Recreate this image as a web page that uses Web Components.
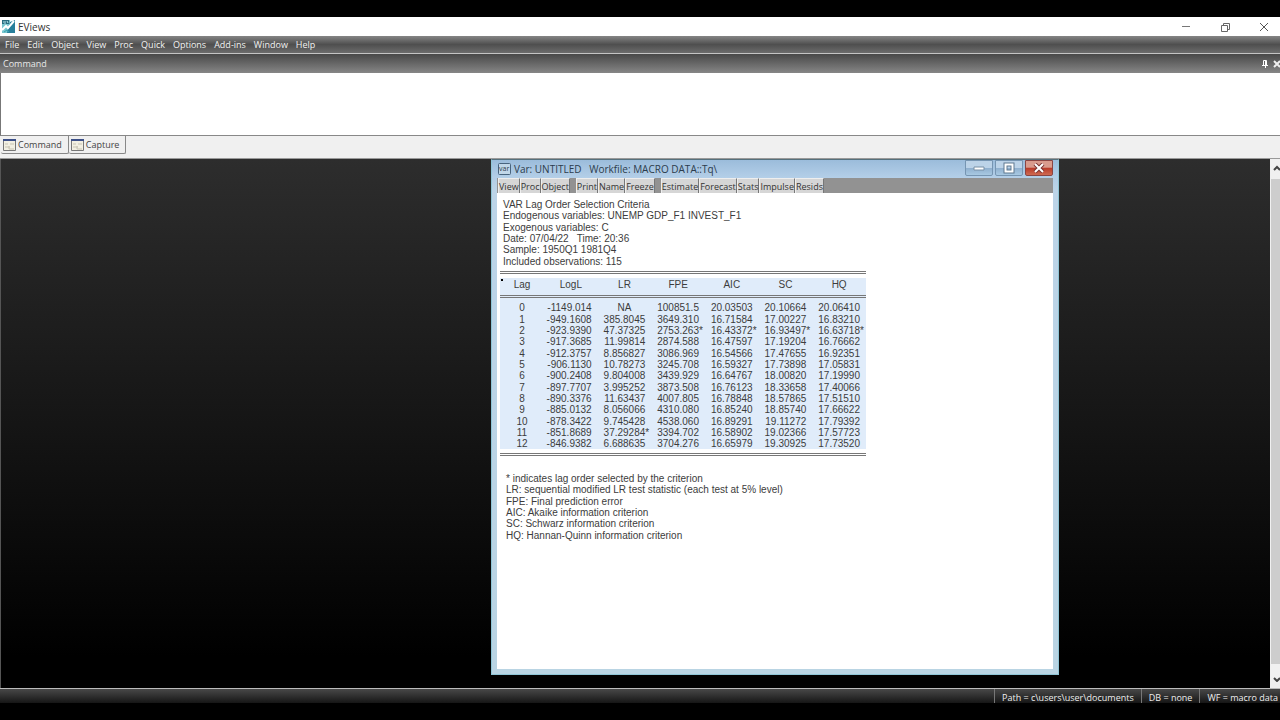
<!DOCTYPE html>
<html lang="en">
<head>
<meta charset="utf-8">
<title>EViews</title>
<style>
  html, body {
    height: 100%;
    margin: 0;
    background: #000;
  }

  body {
    font-family: "Open Sans", "Noto Sans", sans-serif;
    font-size: 9px;
    line-height: 14px;
    overflow: hidden;
  }
</style>
</head>
<body>
<eviews-app></eviews-app>

<script>
class TitleBar extends HTMLElement {
  constructor() {
    super();
    this.attachShadow({ mode: "open" }).innerHTML = `
      <style>
        :host {
          display: flex;
          align-items: center;
          height: 19px;
          background: #fff;
          font-size: 10px;
          color: #333;
        }

        .logo {
          margin: 0 3px 0 2px;
        }

        .title {
          flex-grow: 1;
        }

        button {
          width: 39px;
          height: 19px;
          padding: 0;
          border: 0;
          background: none;
        }

        svg {
          display: block;
          margin: 0 auto;
        }

        .controls {
          display: flex;
          margin-right: -3px;
        }
      </style>
      <svg class="logo" width="13" height="13" viewBox="0 0 13 13">
        <path d="M0 0h8v13H0z" fill="#78c6cf"/>
        <path d="M8 2l5-2v13H5z" fill="#287f9b"/>
        <path d="M0 0h7v4H0z" fill="#276c80"/>
        <path d="M1 2h1M3 1v3M5 1l1 2" stroke="#b6e8ed"/>
        <path d="M0 10l4-4 2 2 6-7" fill="none" stroke="#fff" stroke-width="2"/>
        <path d="M2 12l3-2 2 2" fill="none" stroke="#36a1ae"/>
      </svg>
      <span class="title"><slot></slot></span>
      <div class="controls">
        <button aria-label="Minimize">
          <svg width="10" height="10" fill="none" stroke="#777"><path d="M1 4.5h8"/></svg>
        </button>
        <button aria-label="Restore">
          <svg width="10" height="10" fill="none" stroke="#666"><path d="M1.500 3.500h6v6h-6zM3.500 3V1.500h6v6H8"/></svg>
        </button>
        <button aria-label="Close">
          <svg width="10" height="10" fill="none" stroke="#555"><path d="M1 1l8 8M9 1L1 9"/></svg>
        </button>
      </div>
    `;
  }
}

customElements.define("title-bar", TitleBar);

class MenuStrip extends HTMLElement {
  constructor() {
    super();
    const items = this.getAttribute("items").split(",");
    this.attachShadow({ mode: "open" }).innerHTML = `
      <style>
        :host {
          display: flex;
          align-items: center;
          gap: 8px;
          height: 17px;
          padding-left: 5px;
          border-bottom: 1px solid #c4c4c4;
          background: linear-gradient(#858585, #4f4f4f 50%, #6c6c6c);
        }

        button {
          padding: 0;
          border: 0;
          background: none;
          font: inherit;
          color: #f2f2f2;
        }
      </style>
      ${items.map((item) => `<button>${item}</button>`).join("")}
    `;
  }
}

customElements.define("menu-strip", MenuStrip);

class CommandPane extends HTMLElement {
  constructor() {
    super();
    this.attachShadow({ mode: "open" }).innerHTML = `
      <style>
        :host {
          display: block;
          background: #f0f0f0;
        }

        .header {
          display: flex;
          align-items: center;
          height: 19px;
          padding-left: 3px;
          background: linear-gradient(#484848, #868686);
          color: #e8e8e8;
          overflow: hidden;
        }

        label {
          flex-grow: 1;
        }

        .header button {
          height: 12px;
          padding: 0 2px;
          border: 0;
          background: none;
        }

        .header svg {
          display: block;
        }

        .header .close {
          margin-right: -3px;
        }

        textarea {
          display: block;
          box-sizing: border-box;
          width: 100%;
          height: 63px;
          padding: 2px;
          border: 0;
          border-left: 1px solid #777;
          border-bottom: 1px solid #888;
          outline: none;
          resize: none;
          background: #fff;
          font: inherit;
        }

        .tabs {
          display: flex;
          height: 23px;
          padding-left: 1px;
          border-bottom: 1px solid #999;
          box-sizing: border-box;
        }

        .tabs button {
          display: flex;
          align-items: center;
          gap: 2px;
          height: 18px;
          padding: 0 6px 0 2px;
          border: 1px solid #888;
          border-width: 0 1px 1px 0;
          border-radius: 0 0 2px 2px;
          background: #f0f0f0;
          font: inherit;
          color: #444;
        }
      </style>
      <div class="header">
        <label for="command">Command</label>
        <button aria-label="Pin">
          <svg width="8" height="10" fill="none" stroke="#fff"><path d="M2.500 6V1.500h3V6M1 6.500h6M4.500 7v2M4.500 1v5"/></svg>
        </button>
        <button class="close" aria-label="Close">
          <svg width="8" height="10" fill="none" stroke="#eee" stroke-width="2"><path d="M1 2l6 6M7 2L1 8"/></svg>
        </button>
      </div>
      <textarea id="command"></textarea>
      <div class="tabs">
        ${this.getTab("Command")}
        ${this.getTab("Capture")}
      </div>
    `;
  }

  getTab(name) {
    return `
      <button>
        <svg width="13" height="12">
          <path d="M.5 .5h12v11H.5z" fill="#f2efe2" stroke="#777"/>
          <path d="M0 0h13v2H0z" fill="#3c4f88"/>
          <path d="M2 5h3M2 8h5M7 5h4M6 7v3h5" fill="none" stroke="#c7c3b3"/>
        </svg>
        ${name}
      </button>
    `;
  }
}

customElements.define("command-pane", CommandPane);

class ObjectWindow extends HTMLElement {
  constructor() {
    super();
    const groups = [
      ["View", "Proc", "Object"],
      ["Print", "Name", "Freeze"],
      ["Estimate", "Forecast", "Stats", "Impulse", "Resids"],
    ];
    this.attachShadow({ mode: "open" }).innerHTML = `
      <style>
        :host {
          display: flex;
          flex-direction: column;
          box-sizing: border-box;
          padding: 0 5px 5px;
          border: 1px solid #8fc5d6;
          border-top-color: #55707c;
          background: linear-gradient(#a5c4e2, #bcd4e8 30px, #b9d4e3);
        }

        .caption {
          display: flex;
          align-items: center;
          gap: 3px;
          height: 18px;
          margin: 0 -5px;
          padding: 0 5px 0 6px;
          background: linear-gradient(#9bbcdb, #b4cfe8);
          font-size: 10px;
          color: #2c3c4c;
        }

        .caption span {
          flex-grow: 1;
          white-space: pre;
        }

        .caption button {
          display: flex;
          align-items: center;
          justify-content: center;
          box-sizing: border-box;
          width: 28px;
          height: 16px;
          margin-left: -1px;
          padding: 0;
          border: 1px solid #7695b2;
          border-radius: 0 0 2px 2px;
          background: linear-gradient(#bcd3e8 50%, #8fafce 50%, #a8c9e2);
          align-self: flex-start;
        }

        .caption .close {
          border-color: #8a4543;
          background: linear-gradient(#d99b8d 45%, #b93a28 50%, #ce6a52);
        }

        .toolbar {
          display: flex;
          gap: 6px;
          height: 15px;
          padding-left: 1px;
          background: #929292;
        }

        .group {
          display: flex;
        }

        .toolbar button {
          padding: 0;
          border: 1px solid #eee;
          border-width: 1px 1px 0 1px;
          border-right-color: #777;
          background: #d6d6d6;
          font: inherit;
          line-height: 13px;
          color: #333;
        }

        .content {
          flex-grow: 1;
          background: #fff;
        }
      </style>
      <div class="caption">
        <svg width="13" height="12" viewBox="0 0 13 12">
          <rect x=".5" y=".5" width="12" height="11" rx="1" fill="#c1d7e9" stroke="#48647e"/>
          <text x="1" y="8" font-family="Open Sans" font-size="7" fill="#2c3c4c">var</text>
        </svg>
        <span>${this.getAttribute("caption")}</span>
        <button aria-label="Minimize">
          <svg width="12" height="10"><path d="M1 4h10v3H1z" fill="#fff" stroke="#7890a6"/></svg>
        </button>
        <button aria-label="Maximize">
          <svg width="12" height="12" fill="none"><path d="M2.500 2.500h7v7h-7z" stroke="#5f788f" stroke-width="4"/><path d="M2.500 2.500h7v7h-7z" stroke="#fff" stroke-width="2"/></svg>
        </button>
        <button class="close" aria-label="Close">
          <svg width="12" height="10" fill="none"><path d="M2 1l8 8M10 1L2 9" stroke="#7b3432" stroke-width="4"/><path d="M2 1l8 8M10 1L2 9" stroke="#fff" stroke-width="2"/></svg>
        </button>
      </div>
      <div class="toolbar">
        ${groups
          .map((group) => `<div class="group">${group.map((name) => `<button>${name}</button>`).join("")}</div>`)
          .join("")}
      </div>
      <div class="content"><slot></slot></div>
    `;
  }
}

customElements.define("object-window", ObjectWindow);

class LagCriteria extends HTMLElement {
  columns = ["Lag", "LogL", "LR", "FPE", "AIC", "SC", "HQ"];

  rows = [
    "0 -1149.014 NA 100851.5 20.03503 20.10664 20.06410",
    "1 -949.1608 385.8045 3649.310 16.71584 17.00227 16.83210",
    "2 -923.9390 47.37325 2753.263* 16.43372* 16.93497* 16.63718*",
    "3 -917.3685 11.99814 2874.588 16.47597 17.19204 16.76662",
    "4 -912.3757 8.856827 3086.969 16.54566 17.47655 16.92351",
    "5 -906.1130 10.78273 3245.708 16.59327 17.73898 17.05831",
    "6 -900.2408 9.804008 3439.929 16.64767 18.00820 17.19990",
    "7 -897.7707 3.995252 3873.508 16.76123 18.33658 17.40066",
    "8 -890.3376 11.63437 4007.805 16.78848 18.57865 17.51510",
    "9 -885.0132 8.056066 4310.080 16.85240 18.85740 17.66622",
    "10 -878.3422 9.745428 4538.060 16.89291 19.11272 17.79392",
    "11 -851.8689 37.29284* 3394.702 16.58902 19.02366 17.57723",
    "12 -846.9382 6.688635 3704.276 16.65979 19.30925 17.73520",
  ];

  constructor() {
    super();
    this.attachShadow({ mode: "open" }).innerHTML = this.getStyles() + this.getTemplate();
  }

  getStyles() {
    return `
      <style>
        :host {
          display: block;
          padding: 6px 3px;
          font-family: "Liberation Sans", Arial, sans-serif;
          font-size: 10px;
          line-height: 11px;
          color: #3c3c3c;
        }

        /* six lines share the block height */
        .lines {
          display: grid;
          grid-auto-rows: 1fr;
          height: 68px;
          padding-left: 3px;
          white-space: pre;
        }

        .rule {
          height: 1px;
          border: 1px solid #777;
          border-width: 1px 0;
        }

        .sheet {
          width: 366px;
          margin: 4px 0 17px;
        }

        table {
          width: 100%;
          margin-top: 4px;
          border-spacing: 0;
          table-layout: fixed;
          background: #e0ecfa;
        }

        th, td {
          padding: 0;
          font-weight: normal;
          text-align: right;
        }

        th, .center {
          text-align: center;
        }

        th:first-child {
          width: 44px;
        }

        thead th {
          height: 12px;
          padding-bottom: 5px;
          vertical-align: middle;
        }

        thead th:first-child {
          background: radial-gradient(circle at 2px 2px, #000 1px, transparent 1px);
        }

        .divider td {
          height: 6px;
          vertical-align: top;
        }

        tbody td {
          height: 11px;
        }

        tbody tr:nth-child(3n) td {
          height: 12px;
        }

        .divider + tr td {
          height: 12px;
        }

        .mark {
          display: inline-block;
          width: 4px;
          margin-right: 2px;
          text-align: left;
        }

        .end {
          margin-top: 4px;
        }

        .notes {
          padding-left: 6px;
        }
      </style>
    `;
  }

  getCell(value, index) {
    if (index === 0 || value === "NA") {
      return `<td class="center">${value}</td>`;
    }
    const mark = value.endsWith("*") ? "*" : "";
    return `<td>${value.replace("*", "")}<span class="mark">${mark}</span></td>`;
  }

  getTemplate() {
    return `
      <div class="lines">
        <div>VAR Lag Order Selection Criteria</div>
        <div>Endogenous variables: UNEMP GDP_F1 INVEST_F1</div>
        <div>Exogenous variables: C</div>
        <div>Date: 07/04/22   Time: 20:36</div>
        <div>Sample: 1950Q1 1981Q4</div>
        <div>Included observations: 115</div>
      </div>
      <div class="sheet">
        <div class="rule"></div>
        <table>
          <thead>
            <tr>${this.columns.map((name) => `<th scope="col">${name}</th>`).join("")}</tr>
          </thead>
          <tbody>
            <tr class="divider"><td colspan="7"><div class="rule"></div></td></tr>
            ${this.rows.map((row) => `<tr>${row.split(" ").map(this.getCell).join("")}</tr>`).join("")}
          </tbody>
        </table>
        <div class="rule end"></div>
      </div>
      <div class="lines notes">
        <div>* indicates lag order selected by the criterion</div>
        <div>LR: sequential modified LR test statistic (each test at 5% level)</div>
        <div>FPE: Final prediction error</div>
        <div>AIC: Akaike information criterion</div>
        <div>SC: Schwarz information criterion</div>
        <div>HQ: Hannan-Quinn information criterion</div>
      </div>
    `;
  }
}

customElements.define("lag-criteria", LagCriteria);

class WorkSpace extends HTMLElement {
  constructor() {
    super();
    this.attachShadow({ mode: "open" }).innerHTML = `
      <style>
        :host {
          display: flex;
          min-height: 0;
          border-left: 1px solid #555;
        }

        .desk {
          position: relative;
          flex-grow: 1;
          background: linear-gradient(#2d2d2d, #000 94%);
          overflow: hidden;
        }

        .scroll {
          display: flex;
          flex-direction: column;
          width: 10px;
          background: #f0f0f0;
          overflow: hidden;
        }

        .scroll button {
          height: 20px;
          padding: 0;
          border: 0;
          background: none;
        }

        .scroll svg {
          display: block;
          margin-left: 2px;
        }

        .thumb {
          flex-grow: 1;
          margin: 0 0 4px 1px;
          background: #cdcdcd;
        }
      </style>
      <div class="desk"><slot></slot></div>
      <div class="scroll">
        <button aria-label="Scroll up">
          <svg width="10" height="14" fill="none" stroke="#444" stroke-width="2"><path d="M2 8l3-3 3 3"/></svg>
        </button>
        <div class="thumb"></div>
        <button aria-label="Scroll down">
          <svg width="10" height="8" fill="none" stroke="#444" stroke-width="2"><path d="M2 4l3 3 3-3"/></svg>
        </button>
      </div>
    `;
  }
}

customElements.define("work-space", WorkSpace);

class StatusBar extends HTMLElement {
  constructor() {
    super();
    this.attachShadow({ mode: "open" }).innerHTML = `
      <style>
        :host {
          display: flex;
          justify-content: flex-end;
          box-sizing: border-box;
          height: 15px;
          border-top: 1px solid #bbb;
          background: linear-gradient(#484848, #161616);
          color: #eee;
        }

        ::slotted(span) {
          padding: 3px 7px 0;
          border-left: 1px solid #777;
          line-height: 11px;
        }

        ::slotted(span:last-child) {
          padding-right: 2px;
        }
      </style>
      <slot></slot>
    `;
  }
}

customElements.define("status-bar", StatusBar);

class EviewsApp extends HTMLElement {
  constructor() {
    super();
    this.attachShadow({ mode: "open" }).innerHTML = `
      <style>
        :host {
          display: flex;
          flex-direction: column;
          box-sizing: border-box;
          height: 100vh;
          padding: 17px 0;
        }

        work-space {
          flex-grow: 1;
        }

        /* the document window floats on the desk */
        object-window {
          position: absolute;
          left: 490px;
          top: 0;
          width: 568px;
          height: 516px;
        }
      </style>
      <title-bar>EViews</title-bar>
      <menu-strip items="File,Edit,Object,View,Proc,Quick,Options,Add-ins,Window,Help"></menu-strip>
      <command-pane></command-pane>
      <work-space>
        <object-window caption="Var: UNTITLED   Workfile: MACRO DATA::Tq\\">
          <lag-criteria></lag-criteria>
        </object-window>
      </work-space>
      <status-bar>
        <span>Path = c\\users\\user\\documents</span>
        <span>DB = none</span>
        <span>WF = macro data</span>
      </status-bar>
    `;
  }
}

customElements.define("eviews-app", EviewsApp);
</script>
</body>
</html>
